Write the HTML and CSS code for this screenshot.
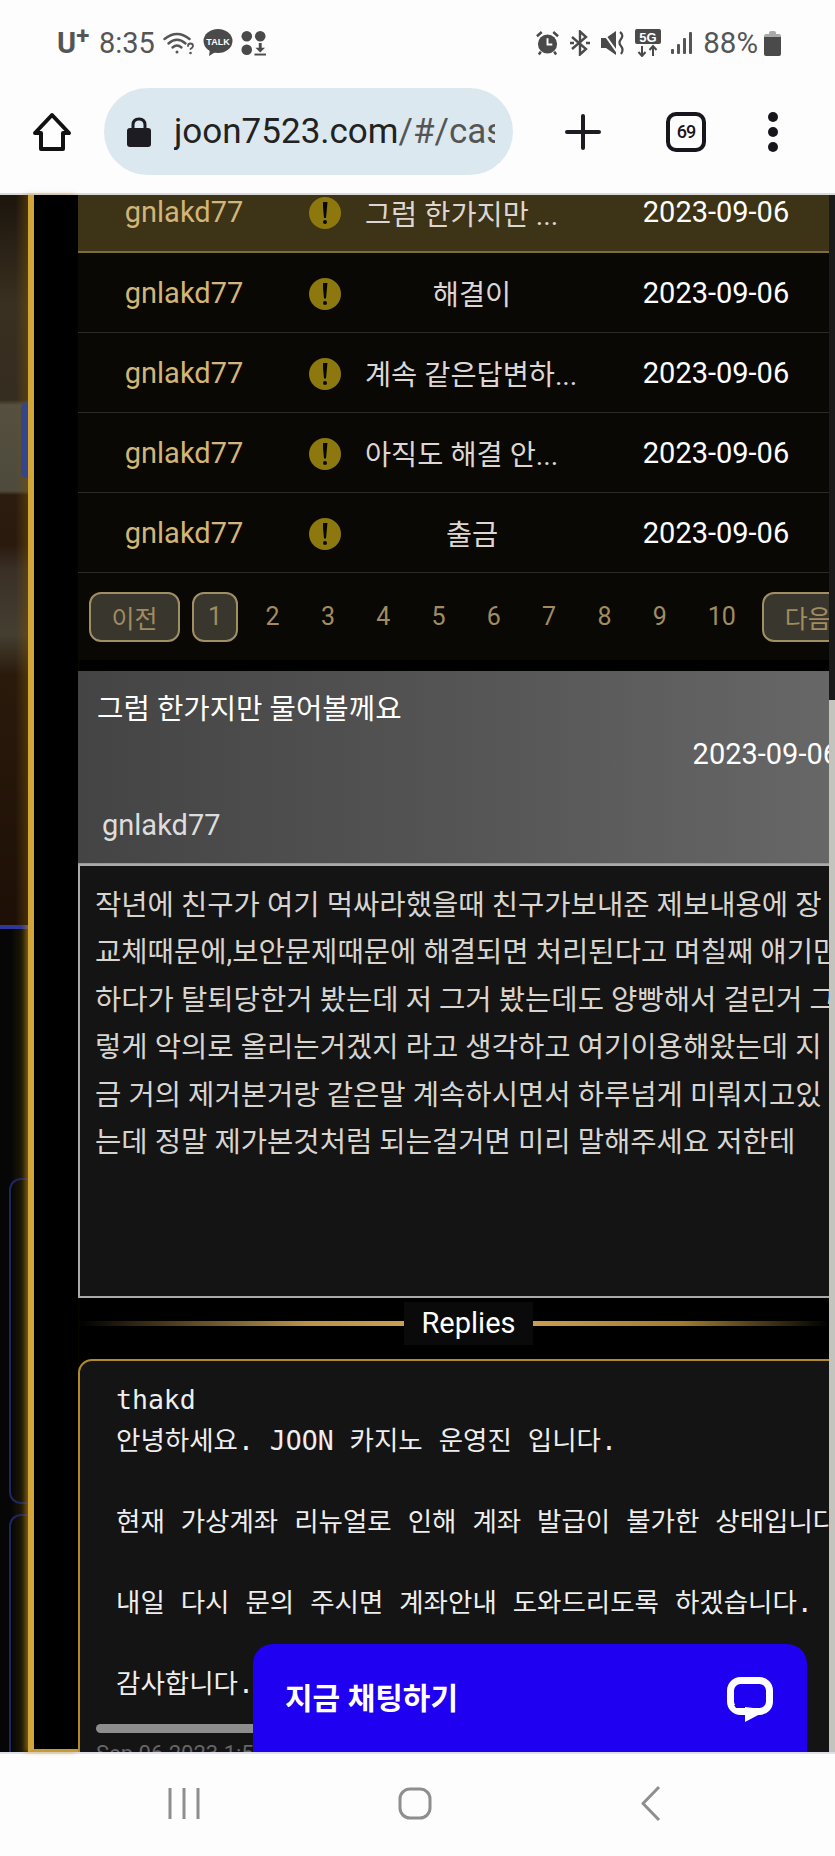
FILE: index.html
```html
<!DOCTYPE html>
<html lang="ko">
<head>
	<meta charset="utf-8">
	<title>joon7523.com</title>
	<link rel="stylesheet" href="styles.css">
</head>
<body>
	<div class="phone">
		<div class="statusbar">
			<div class="status-left">
				<span class="carrier">U<sup>+</sup></span>
				<span class="clock">8:35</span>
				<svg class="ico-wifi" width="32" height="24" viewBox="0 0 32 24" fill="none" stroke="#555" stroke-width="2.4" stroke-linecap="round">
					<path d="M1.500 8 Q14 -2 26.500 8"/>
					<path d="M5.500 12.500 Q14 5 22.500 12.500"/>
					<path d="M9.500 16.500 Q14 12.500 18.500 16.500"/>
					<circle cx="14" cy="21" r="1.500" fill="#555" stroke="none"/>
					<path d="M25 15 Q25 12.500 27.500 12.500 Q30 12.500 30 15 Q30 16.500 27.500 18" stroke-width="1.800"/>
					<circle cx="27.500" cy="22" r="1.300" fill="#555" stroke="none"/>
				</svg>
				<svg class="ico-talk" width="30" height="28" viewBox="0 0 30 28">
					<ellipse cx="15" cy="12" rx="14.500" ry="12" fill="#4a4a4a"/>
					<path d="M7 20 L6 27 L14 22 Z" fill="#4a4a4a"/>
					<text x="15" y="16" text-anchor="middle" class="talk-label">TALK</text>
				</svg>
				<svg class="ico-dots" width="25" height="26" viewBox="0 0 26 26" fill="#4a4a4a">
					<circle cx="6" cy="6" r="5.500"/>
					<circle cx="20" cy="6" r="5.500"/>
					<circle cx="6" cy="20" r="5.500"/>
					<path d="M18.500 13 H21.500 V18 H25 L20 23 L15 18 H18.500 Z"/>
					<rect x="14" y="24" width="12" height="2"/>
				</svg>
			</div>
			<div class="status-right">
				<svg width="23" height="26" viewBox="0 0 24 26">
					<circle cx="12" cy="14" r="10" fill="#4a4a4a"/>
					<path d="M12 8 V14.500 H17" stroke="#fff" stroke-width="2" fill="none"/>
					<path d="M1 6 L6 1.500 M23 6 L18 1.500 M5 22 L3 25 M19 22 L21 25" stroke="#4a4a4a" stroke-width="2.600"/>
				</svg>
				<svg width="22" height="26" viewBox="0 0 22 26" fill="none" stroke="#4a4a4a" stroke-width="2.400">
					<path d="M3 7 L17 19 L11 24.500 V1.500 L17 7 L3 19"/>
					<path d="M1 13 H5 M17 13 H21" stroke-width="2.600"/>
				</svg>
				<svg width="24" height="26" viewBox="0 0 24 26">
					<path d="M0 8 H5 L15 1 V25 L5 18 H0 Z" fill="#4a4a4a"/>
					<path d="M1 1 L16 22" stroke="#fdfdfe" stroke-width="2"/>
					<path d="M19 2 Q23 5 20 9 Q17 13 20 16 Q23 20 20 24" stroke="#4a4a4a" stroke-width="2.200" fill="none"/>
				</svg>
				<svg width="26" height="28" viewBox="0 0 26 28">
					<rect width="26" height="15" rx="2" fill="#4a4a4a"/>
					<text x="13" y="12.500" text-anchor="middle" class="net-label">5G</text>
					<path d="M7 17 V26 M3.500 23 L7 27 L10.500 23 M18 27 V18 M14.500 21 L18 17 L21.500 21" stroke="#4a4a4a" stroke-width="2" fill="none"/>
				</svg>
				<svg class="ico-signal" width="22" height="24" viewBox="0 0 22 24" fill="#555">
					<rect x="0" y="18" width="3" height="5" rx="1"/>
					<rect x="6" y="13" width="3" height="10" rx="1"/>
					<rect x="12" y="7" width="3" height="16" rx="1"/>
					<rect x="18" y="1" width="3" height="22" rx="1"/>
				</svg>
				<span class="battery-text">88%</span>
				<svg width="17" height="25" viewBox="0 0 17 25">
					<path d="M5 2 Q5 0 7 0 H10 Q12 0 12 2 V3 H15 Q17 3 17 5 V6 H0 V5 Q0 3 2 3 H5 Z" fill="#aaa"/>
					<path d="M0 6 H17 V23 Q17 25 15 25 H2 Q0 25 0 23 Z" fill="#4a4a4a"/>
				</svg>
			</div>
		</div>

		<div class="browserbar">
			<svg class="ico-home" width="40" height="40" viewBox="0 0 40 40" fill="none" stroke="#111" stroke-width="4" stroke-linejoin="round">
				<path d="M20 3 L37 21 H31 V37 H9 V21 H3 Z"/>
			</svg>
			<div class="urlbar">
				<svg width="24" height="30" viewBox="0 0 24 30">
					<path d="M6 12 V8 Q6 2 12 2 Q18 2 18 8 V12" fill="none" stroke="#1c1c22" stroke-width="3"/>
					<rect y="11" width="24" height="19" rx="3" fill="#1c1c22"/>
				</svg>
				<span class="urltext">joon7523.com<span class="urlpath">/#/cas</span></span>
			</div>
			<svg class="ico-plus" width="36" height="36" viewBox="0 0 36 36" stroke="#1c1c22" stroke-width="4" stroke-linecap="round">
				<path d="M18 2 V34 M2 18 H34"/>
			</svg>
			<div class="tabs">69</div>
			<div class="menu-dots"><i></i><i></i><i></i></div>
		</div>

		<div class="page">
			<div class="side">
				<div class="side-photo">
					<div class="side-tab"></div>
				</div>
				<div class="side-stripe"></div>
				<div class="side-lower">
					<div class="side-card"></div>
					<div class="side-card side-card-last"></div>
				</div>
			</div>
			<div class="frame"></div>

			<div class="main">
				<div class="board">
					<div class="row row-active">
						<div class="c-user">gnlakd77</div>
						<div class="c-icon"><span class="alert"></span></div>
						<div class="c-subject c-subject-long">그럼 한가지만 ...</div>
						<div class="c-date">2023-09-06</div>
					</div>
					<div class="row">
						<div class="c-user">gnlakd77</div>
						<div class="c-icon"><span class="alert"></span></div>
						<div class="c-subject">해결이</div>
						<div class="c-date">2023-09-06</div>
					</div>
					<div class="row">
						<div class="c-user">gnlakd77</div>
						<div class="c-icon"><span class="alert"></span></div>
						<div class="c-subject c-subject-long">계속 같은답변하...</div>
						<div class="c-date">2023-09-06</div>
					</div>
					<div class="row">
						<div class="c-user">gnlakd77</div>
						<div class="c-icon"><span class="alert"></span></div>
						<div class="c-subject c-subject-long">아직도 해결 안...</div>
						<div class="c-date">2023-09-06</div>
					</div>
					<div class="row">
						<div class="c-user">gnlakd77</div>
						<div class="c-icon"><span class="alert"></span></div>
						<div class="c-subject">출금</div>
						<div class="c-date">2023-09-06</div>
					</div>
					<div class="pager">
						<span class="pg-btn pg-prev">이전</span>
						<span class="pg-btn pg-current">1</span>
						<span class="pg-num">2</span>
						<span class="pg-num">3</span>
						<span class="pg-num">4</span>
						<span class="pg-num">5</span>
						<span class="pg-num">6</span>
						<span class="pg-num">7</span>
						<span class="pg-num">8</span>
						<span class="pg-num">9</span>
						<span class="pg-num pg-ten">10</span>
						<span class="pg-btn pg-next">다음</span>
					</div>
				</div>

				<div class="post-head">
					<div class="post-title">그럼 한가지만 물어볼께요</div>
					<div class="post-date">2023-09-06</div>
					<div class="post-author">gnlakd77</div>
				</div>
				<div class="post-body">작년에 친구가 여기 먹싸라했을때 친구가보내준 제보내용에 장<br>교체때문에,보안문제때문에 해결되면 처리된다고 며칠째 얘기만<br>하다가 탈퇴당한거 봤는데 저 그거 봤는데도 양빵해서 걸린거 그<br>렇게 악의로 올리는거겠지 라고 생각하고 여기이용해왔는데 지<br>금 거의 제거본거랑 같은말 계속하시면서 하루넘게 미뤄지고있<br>는데 정말 제가본것처럼 되는걸거면 미리 말해주세요 저한테</div>

				<div class="replies">
					<div class="replies-line replies-left"></div>
					<div class="replies-label">Replies</div>
					<div class="replies-line replies-right"></div>
				</div>

				<div class="reply">
					<pre class="reply-text">thakd
안녕하세요. JOON 카지노 운영진 입니다.

현재 가상계좌 리뉴얼로 인해 계좌 발급이 불가한 상태입니다

내일 다시 문의 주시면 계좌안내 도와드리도록 하겠습니다.

감사합니다.</pre>
					<div class="reply-scroll"></div>
					<div class="reply-meta">Sep 06 2023 1:5</div>
				</div>
			</div>

			<div class="pagescroll"><div class="pagescroll-thumb"></div></div>

			<div class="chat">
				<span class="chat-label">지금 채팅하기</span>
				<svg width="46" height="45" viewBox="0 0 46 45">
					<rect x="3.500" y="3.500" width="39" height="31" rx="10" fill="none" stroke="#fff" stroke-width="7"/>
					<path d="M18 30 V45 L35 36 V32 Z" fill="#fff"/>
					<path d="M7 28 H18 V31 H9 Z" fill="#1f00f0"/>
				</svg>
			</div>
		</div>

		<div class="navbar">
			<svg width="32" height="33" viewBox="0 0 32 33" stroke="#8e8e8e" stroke-width="3">
				<path d="M2 1 V32 M16 1 V32 M30 1 V32"/>
			</svg>
			<svg class="nav-home" width="34" height="33" viewBox="0 0 34 33" fill="none" stroke="#8e8e8e" stroke-width="3">
				<rect x="2" y="2" width="30" height="29" rx="10"/>
			</svg>
			<svg width="20" height="37" viewBox="0 0 20 37" fill="none" stroke="#8e8e8e" stroke-width="3" stroke-linejoin="round">
				<path d="M18 2 L2 18.500 L18 35"/>
			</svg>
		</div>
	</div>
</body>
</html>
```

FILE: styles.css
```css
* {
	box-sizing: border-box;
}
body {
	margin: 0;
	padding: 0;
	background-color: #fff;
	font-family: Roboto, "Noto Sans CJK KR", sans-serif;
}
.phone {
	display: flex;
	flex-direction: column;
	width: 835px;
	height: 1856px;
	overflow: hidden;
}

/* status bar */
.statusbar {
	display: flex;
	justify-content: space-between;
	align-items: center;
	height: 86px;
	padding: 0 54px 0 57px;
	background-color: #fdfdfe;
	color: #555;
}
.status-left,
.status-right {
	display: flex;
	align-items: center;
}
.status-left svg {
	margin-left: 8px;
}
.status-right {
	gap: 10px;
}
.carrier {
	font-size: 29px;
	font-weight: 700;
	line-height: 32px;
	width: 31px;
}
.carrier sup {
	font-size: 24px;
	line-height: 0;
	vertical-align: 9px;
}
.clock {
	margin-left: 11px;
	font-size: 29px;
	line-height: 34px;
}
.talk-label {
	font-family: "Liberation Sans", sans-serif;
	font-size: 9px;
	font-weight: 700;
	fill: #fff;
}
.net-label {
	font-family: "Liberation Sans", sans-serif;
	font-size: 13px;
	font-weight: 700;
	fill: #fff;
}
.battery-text {
	font-size: 29.500px;
	line-height: 34px;
	margin: 0 -4px 0 0;
}

/* browser bar */
.browserbar {
	display: flex;
	align-items: center;
	height: 109px;
	padding: 0 0 16px 32px;
	background-color: #fdfdfe;
	border-bottom: 2px solid #d9dadb;
}
.ico-home {
	flex: none;
}
.urlbar {
	display: flex;
	align-items: center;
	gap: 23px;
	flex: none;
	width: 409px;
	height: 87px;
	margin-left: 32px;
	padding: 0 18px 0 23px;
	border-radius: 44px;
	background-color: #dce8f0;
	overflow: hidden;
}
.urlbar svg {
	flex: none;
}
.urltext {
	font-size: 35px;
	color: #222;
	white-space: nowrap;
	overflow: hidden;
}
.urlpath {
	color: #555;
}
.ico-plus {
	flex: none;
	margin-left: 52px;
}
.tabs {
	flex: none;
	display: flex;
	align-items: center;
	justify-content: center;
	width: 40px;
	height: 40px;
	margin-left: 65px;
	border: 4px solid #16161c;
	border-radius: 10px;
	font-size: 18px;
	font-weight: 500;
	letter-spacing: -1px;
	color: #16161c;
}
.menu-dots {
	display: flex;
	flex-direction: column;
	gap: 5px;
	margin-left: 62px;
}
.menu-dots i {
	display: block;
	width: 10px;
	height: 10px;
	border-radius: 50%;
	background-color: #16161c;
}

/* page area */
.page {
	position: relative;
	display: flex;
	flex: 1;
	min-height: 0;
	background-color: #000;
}
.side {
	display: flex;
	flex-direction: column;
	flex: none;
	width: 28px;
	background-color: #0b0b0b;
}
.side-photo {
	position: relative;
	flex: none;
	height: 730px;
	background:
		linear-gradient(90deg, rgba(0, 0, 0, 0) 55%, rgba(120, 85, 10, 0.45) 100%),
		linear-gradient(180deg, #1c150c 0, #3a3020 110px, #352c20 205px, #55503f 210px, #4e4a3c 296px, #2c1b0e 300px, #2a1a0e 350px, #3a3026 375px, #443e30 440px, #2a1a0c 480px, #1e0f06 730px);
}
.side-tab {
	position: absolute;
	top: 207px;
	right: 0;
	width: 7px;
	height: 76px;
	border-radius: 6px 0 0 6px;
	background-color: #36448a;
}
.side-stripe {
	flex: none;
	height: 4px;
	background-color: #2d389a;
}
.side-lower {
	display: flex;
	flex-direction: column;
	gap: 10px;
	flex: 1;
	padding: 249px 0 0 9px;
	background: linear-gradient(90deg, #060606 40%, #2a2108 100%);
}
.side-card {
	flex: none;
	height: 326px;
	border: 2px solid #20275e;
	border-right: none;
	border-radius: 12px 0 0 12px;
}
.side-card-last {
	flex: 1;
	border-bottom: none;
	border-radius: 12px 0 0 0;
}
.frame {
	flex: none;
	width: 50px;
	border-left: 6px solid #d2a43c;
	border-bottom: 3px solid #c79a35;
	box-shadow: -3px 0 5px rgba(190, 140, 30, 0.55);
	background-color: #000;
}
.main {
	flex: none;
	width: 751px;
	overflow: hidden;
}
.pagescroll {
	flex: none;
	width: 6px;
	background-color: #1a1a1a;
}
.pagescroll-thumb {
	height: 1052px;
	margin-top: 505px;
	background-color: #c4c4be;
}

/* board table */
.board {
	width: 775px;
	margin-top: -22px;
	margin-bottom: 11px;
	background-color: #0a0805;
}
.row {
	display: grid;
	grid-template-columns: 212px 70px 224px 264px;
	align-items: center;
	height: 80px;
	border-bottom: 1px solid #2b2a24;
	text-align: center;
	font-size: 29px;
}
.row-active {
	background-color: #3d3316;
	border-bottom: 2px solid #7c6c3f;
}
.c-user {
	color: #d2b578;
}
.c-icon {
	display: flex;
	justify-content: center;
	padding-top: 2px;
}
.c-subject {
	font-size: 28.400px;
	color: #ddd6d2;
	white-space: nowrap;
}
.c-subject-long {
	padding-left: 5px;
	text-align: left;
}
.c-date {
	color: #fff;
}
.alert {
	position: relative;
	display: block;
	width: 32px;
	height: 32px;
	border-radius: 50%;
	background-color: #8d780e;
}
.alert::before {
	content: "";
	position: absolute;
	top: 5px;
	left: 13.500px;
	width: 5px;
	height: 16px;
	background-color: #0a0805;
	clip-path: polygon(0 0, 100% 0, 70% 100%, 30% 100%);
}
.alert::after {
	content: "";
	position: absolute;
	top: 23px;
	left: 14px;
	width: 4px;
	height: 4px;
	border-radius: 50%;
	background-color: #0a0805;
}

/* pager */
.pager {
	display: flex;
	align-items: center;
	height: 87px;
	padding-left: 11px;
	font-size: 25px;
	color: #a08c5f;
	white-space: nowrap;
}
.pg-btn {
	display: flex;
	align-items: center;
	justify-content: center;
	flex: none;
	height: 50px;
	border: 2px solid #a08f63;
	border-radius: 12px;
	background-color: #39362e;
}
.pg-prev {
	width: 91px;
	margin-right: 12px;
}
.pg-current {
	width: 46px;
	margin-right: 7px;
}
.pg-num {
	flex: none;
	width: 55.300px;
	text-align: center;
}
.pg-ten {
	width: 69px;
}
.pg-next {
	width: 91px;
	margin-left: 6px;
}

/* post */
.post-head {
	width: 775px;
	height: 193px;
	padding: 18px 14px 0 19px;
	background: linear-gradient(90deg, #444 0, #555 50%, #686868 100%);
	border-bottom: 1px solid #999;
}
.post-title {
	font-size: 28.700px;
	line-height: 40px;
	color: #fff;
}
.post-date {
	margin-top: 5px;
	font-size: 29px;
	line-height: 40px;
	color: #fff;
	text-align: right;
}
.post-author {
	margin: 31px 0 0 5px;
	font-size: 29px;
	line-height: 40px;
	color: #ddd;
}
.post-body {
	width: 775px;
	height: 434px;
	padding: 16px 0 0 15px;
	border: 2px solid #aaa;
	background-color: #141414;
	color: #d8d4cf;
	font-size: 28.600px;
	line-height: 47.400px;
	white-space: nowrap;
}

/* replies divider */
.replies {
	display: flex;
	align-items: center;
	margin-top: 4px;
}
.replies-line {
	height: 5px;
}
.replies-left {
	flex: none;
	width: 326px;
	background: linear-gradient(90deg, rgba(190, 145, 60, 0) 0, #b8924a 70%, #c9a050 100%);
}
.replies-right {
	flex: 1;
	background: linear-gradient(90deg, #c9a050 0, #a07c30 50%, rgba(190, 145, 60, 0) 100%);
}
.replies-label {
	flex: none;
	width: 129px;
	height: 43px;
	background-color: #0a0a0a;
	color: #fff;
	font-size: 29px;
	line-height: 43px;
	text-align: center;
}

/* reply box */
.reply {
	position: relative;
	width: 775px;
	height: 440px;
	margin-top: 14px;
	padding: 19px 0 0 36px;
	border: 2px solid #b08a28;
	border-radius: 14px 0 0 0;
	background-color: #141414;
}
.reply-text {
	margin: 0;
	font-family: "DejaVu Sans Mono", "Noto Sans CJK KR", monospace;
	font-size: 26.500px;
	line-height: 40.500px;
	color: #eee;
	white-space: pre;
}
.reply-scroll {
	width: 330px;
	height: 9px;
	margin: 20px 0 0 -20px;
	border-radius: 5px;
	background-color: #8d8d8d;
}
.reply-meta {
	margin: 7px 0 0 -20px;
	font-size: 22px;
	line-height: 28px;
	color: #666;
}

/* chat widget */
.chat {
	position: absolute;
	left: 253px;
	right: 28px;
	bottom: 0;
	display: flex;
	justify-content: space-between;
	align-items: flex-start;
	height: 108px;
	padding: 33px 34px 0 32px;
	border-radius: 20px 20px 0 0;
	background-color: #1f00f0;
}
.chat-label {
	font-size: 30px;
	font-weight: 700;
	line-height: 44px;
	color: #fff;
}

/* bottom nav */
.navbar {
	display: flex;
	align-items: center;
	justify-content: space-between;
	height: 104px;
	padding: 0 174px 4px 168px;
	border-top: 2px solid #dde0ea;
	background-color: #fdfdfe;
}
.nav-home {
	margin-right: 12px;
}
```
